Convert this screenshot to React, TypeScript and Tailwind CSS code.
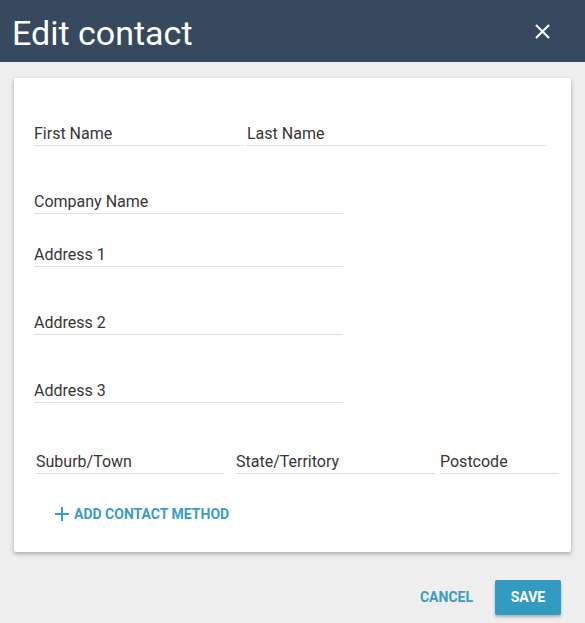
import React from "react";

function Field({ label, className }: { label: string; className?: string }) {
  return (
    <div className={"border-b border-[#e0e0e0] pb-[2px] " + (className ?? "")}>
      <span className="block text-[16px] leading-[18px] text-[#363636]">{label}</span>
    </div>
  );
}

export default function App() {
  return (
    <div className="w-[585px] h-[623px] bg-[#eeeeee] font-['Roboto',sans-serif] overflow-hidden">
      {/* header */}
      <div className="h-[62px] bg-[#37495f] flex items-center justify-between pl-[12px] pr-[30px]">
        <h1 className="text-[34px] leading-[40px] text-white pt-[4px]">Edit contact</h1>
        <button className="text-white">
          <svg width="25" height="25" viewBox="0 0 24 24" fill="currentColor">
            <path d="M19 6.41 17.59 5 12 10.59 6.41 5 5 6.41 10.59 12 5 17.59 6.41 19 12 13.41 17.59 19 19 17.59 13.41 12z" />
          </svg>
        </button>
      </div>

      <div className="px-[14px] pt-[16px]">
        <div className="h-[474px] bg-white shadow-[0_2px_4px_rgba(0,0,0,0.3)] rounded-[2px] pl-[20px] pt-[47px]">
          <div className="flex gap-[4px]">
            <Field label="First Name" className="w-[209px]" />
            <Field label="Last Name" className="w-[299px]" />
          </div>
          <Field label="Company Name" className="w-[309px] mt-[47px]" />
          <Field label="Address 1" className="w-[309px] mt-[32px]" />
          <Field label="Address 2" className="w-[309px] mt-[47px]" />
          <Field label="Address 3" className="w-[309px] mt-[47px]" />

          <div className="flex mt-[50px] pl-[2px]">
            <Field label="Suburb/Town" className="w-[188px]" />
            <Field label="State/Territory" className="w-[199px] ml-[12px]" />
            <Field label="Postcode" className="w-[119px] ml-[5px]" />
          </div>

          <button className="flex items-center gap-[5px] ml-[21px] mt-[32px] h-[16px] text-[#3b9cc4]">
            <svg width="14" height="14" viewBox="0 0 14 14" stroke="currentColor" strokeWidth="2">
              <path d="M7 0v14M0 7h14" />
            </svg>
            <span className="text-[14px] leading-[16px] font-bold uppercase">Add contact method</span>
          </button>
        </div>

        <div className="flex justify-end items-center mt-[28px] pr-[10px]">
          <button className="text-[14px] font-bold text-[#3b9cc4] uppercase">Cancel</button>
          <button className="ml-[22px] w-[66px] h-[35px] bg-[#339bc2] text-white text-[14px] font-bold uppercase rounded-[2px] shadow-[0_2px_3px_rgba(0,0,0,0.25)]">
            Save
          </button>
        </div>
      </div>
    </div>
  );
}
